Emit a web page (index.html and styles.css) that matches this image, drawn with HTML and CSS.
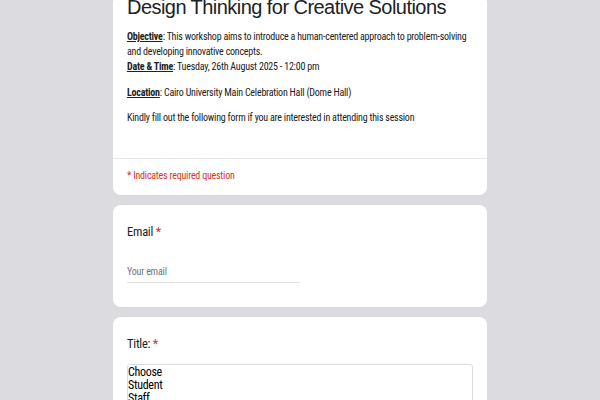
FILE: index.html
```html
<!DOCTYPE html>
<html lang="en">
<head>
<meta charset="utf-8">
<title>Design Thinking for Creative Solutions</title>
<link rel="stylesheet" href="styles.css">
</head>
<body>
<main class="form">
  <section class="card header-card">
    <div class="header-body">
      <h1 class="form-title">Design Thinking for Creative Solutions</h1>
      <div class="desc">
        <p><b>Objective</b>: This workshop aims to introduce a human-centered approach to problem-solving and developing innovative concepts.<br><b>Date &amp; Time</b>: Tuesday, 26th August 2025 - 12:00 pm</p>
        <p><b>Location</b>: Cairo University Main Celebration Hall (Dome Hall)</p>
        <p>Kindly fill out the following form if you are interested in attending this session</p>
      </div>
    </div>
    <div class="required-note">* Indicates required question</div>
  </section>

  <section class="card question">
    <div class="q-label">Email <span class="star">*</span></div>
    <input class="text-input" type="email" placeholder="Your email">
  </section>

  <section class="card question">
    <div class="q-label">Title: <span class="star">*</span></div>
    <div class="listbox" role="listbox">
      <div class="option" role="option">Choose</div>
      <div class="option" role="option">Student</div>
      <div class="option" role="option">Staff</div>
      <div class="option" role="option">Other</div>
    </div>
  </section>
</main>
</body>
</html>
```

FILE: styles.css
```css
html, body {
  margin: 0;
  padding: 0;
  background: #dcdce0;
}

body {
  font-family: Roboto, "Liberation Sans", sans-serif;
  font-stretch: 75%;
  color: #202124;
  overflow: hidden;
  height: 400px;
}

.form {
  width: 374px;
  margin: -5px auto 0;
  display: flex;
  flex-direction: column;
  gap: 10px;
}

.card {
  background: #ffffff;
  border-radius: 8px;
}

.header-body {
  padding: 0 14px 33px;
}

.form-title {
  margin: 0;
  font-family: "Liberation Sans", Arial, sans-serif;
  font-stretch: 100%;
  font-weight: 400;
  font-size: 20px;
  line-height: 24px;
  letter-spacing: -0.55px;
  color: #202124;
}

.desc {
  margin-top: 10px;
  font-size: 10px;
  line-height: 15px;
  letter-spacing: -0.22px;
}

.desc p {
  margin: 0 0 10.5px;
}

.desc p:last-child {
  margin-bottom: 0;
}

.desc b {
  font-weight: 700;
  text-decoration: underline;
}

.required-note {
  border-top: 1px solid #e6e6e8;
  padding: 9px 14px 12px;
  font-size: 10px;
  line-height: 15px;
  letter-spacing: -0.22px;
  color: #d93025;
}

.question {
  padding: 19px 14px 24px;
}

.q-label {
  font-size: 12.5px;
  line-height: 16px;
  letter-spacing: -0.25px;
  color: #202124;
}

.star {
  color: #d93025;
}

.text-input {
  display: block;
  margin: 25px 0 0;
  width: 173px;
  box-sizing: border-box;
  height: 18px;
  padding: 0 0 5px;
  border: none;
  border-bottom: 1px solid #e2e2e4;
  font-family: inherit;
  font-stretch: inherit;
  font-size: 10px;
  letter-spacing: -0.2px;
  color: #202124;
  background: transparent;
  outline: none;
}

.text-input::placeholder {
  color: #70757a;
}

.listbox {
  margin-top: 12px;
  border: 1px solid #dadce0;
  border-radius: 3px;
  padding: 1px 0;
  font-size: 12px;
  line-height: 13px;
  letter-spacing: -0.3px;
  color: #000000;
  height: 80px;
}
```
